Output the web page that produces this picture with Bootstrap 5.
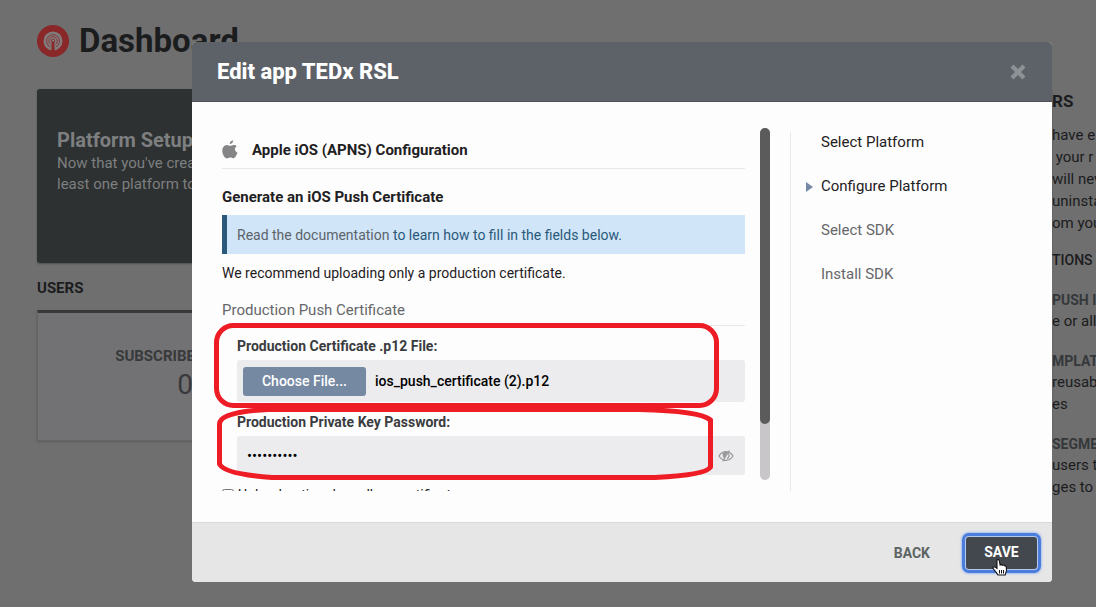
<!DOCTYPE html>
<html lang="en">
<head>
<meta charset="utf-8">
<meta name="viewport" content="width=device-width, initial-scale=1">
<title>Dashboard</title>
<link href="https://cdn.jsdelivr.net/npm/bootstrap@5.3.0/dist/css/bootstrap.min.css" rel="stylesheet">
<style>
body{font-family:Roboto,"Liberation Sans",sans-serif;font-size:14px;line-height:22px;color:#1b1c1e;background:#6f6f6f;min-height:100vh;overflow:hidden}
.page{padding-left:37px;min-height:100vh}
.page-head{height:82px;gap:10px}
.page-head h1{font-size:33px;line-height:40px;font-weight:700;color:#1b1c1e}
.setup{margin-top:7px;height:174px;background:#2d3131;color:#7e7f80;border-radius:3px;padding:39px 20px;box-shadow:0 1px 2px #505050;font-size:15px;line-height:21px;white-space:nowrap}
.setup h2{font-size:20px;line-height:25px;font-weight:700}
.sect{font-size:15px;line-height:22px;font-weight:700;margin:14px 0 11px}
.stats{border:1px solid #646466;border-top:3px solid #38383a;background:#727274;height:131px;box-shadow:0 1px 2px #5c5c5c}
.stat{width:294px;padding-top:32px;color:#38393b;line-height:22px;font-weight:700;font-size:15px}
.stat-n{font-size:28px;line-height:36px;font-weight:400}
.help-col{width:44px;flex:none;white-space:nowrap;padding-top:90px;font-size:15px}
.help-col h3{font-size:17px;line-height:22px;font-weight:700;margin:0 0 12px}
.help-col h4{font-size:14px;line-height:20px;font-weight:500;margin:16px 0 20px}
.help-col .topic{font-size:14px;line-height:20px;color:#35383b;font-weight:700}
.help-col .topic-text{margin-bottom:19px}
.layer{position:absolute;inset:0;padding:42px 44px 25px 192px}
.dialog{position:relative;border:0;border-radius:4px;background:#fdfdfd;color:#1f2022;min-height:540px}
.dialog .modal-header{height:60px;padding:0 26px 0 25px;background:#5d6168;border-bottom:1px solid #504f58;border-radius:4px 4px 0 0}
.dialog h2{font-size:22px;line-height:28px;font-weight:800;color:#fff}
.x-btn{border:0;background:none;padding:0;width:16px;height:18px;line-height:0}
.dialog .modal-body{padding:26px 30px 31px}
.pane{height:363px;overflow:hidden;min-width:0}
.pane-head{height:41px;gap:14px;padding-top:3px;border-bottom:1px solid #e8e8e9}
.pane h3{font-size:15px;line-height:20px;font-weight:700}
.pane h4{font-size:15px;line-height:20px;font-weight:700;margin:18px 0 8px}
.note{height:39px;padding:0 10px;border-left:5px solid #2c587b;background:#d0e5f7;color:#2a587b}
.note a{color:#5c646b;text-decoration:none}
.hint{font-size:14px;line-height:20px;margin:9px 0 16px}
.legend-row{font-size:15px;line-height:22px;color:#66676a;padding-bottom:4px;border-bottom:1px solid #e8e8e9}
.pane .lab{font-size:14px;line-height:20px;font-weight:700;color:#3b3c3f;display:block}
.fieldset-in{padding:10px 0 0 15px}
.file-box{height:42px;background:#ececee;border-radius:3px;padding-left:6px;gap:9px;margin:4px 0 10px;font-size:14px;font-weight:500;color:#000}
.choose{width:123px;height:29px;padding:0;border-radius:3px;background:#7589a3;color:#fff;font-size:14px;line-height:20px;font-weight:500}
.choose:hover{background:#687d98;color:#fff}
.pw-box{height:39px;background:#ececee;border-radius:3px;margin:4px 0 9px;padding:0 11px 0 10px}
.pw-box input{font-size:15px;color:#000;min-width:0}
.opt{gap:4px;font-size:14px;line-height:22px}
.opt input{width:12px;height:12px;margin:0}
.track{width:10px;height:352px;border-radius:5px;background:#c8c6c9;margin:0 20px 0 15px;flex:none}
.thumb{height:296px;border-radius:5px;background:#5b5b5c}
.steps{width:232px;flex:none;margin-top:4px;border-left:1px solid #e9e9ea;height:359px;font-size:15px}
.steps li{height:44px;line-height:20px;padding-left:30px;position:relative}
.steps .todo{color:#66676a}
.steps .now::before{content:"";position:absolute;left:15px;top:6px;border:5px solid transparent;border-left:7px solid #768aa8;border-right:0}
.dialog .modal-footer{height:60px;padding:0 15px;gap:36px;background:#e6e6e6;border-top:1px solid #d9d9da;border-radius:0 0 4px 4px}
.dialog .modal-footer>*{margin:0}
.back-btn{padding:2px 0 0;border:0;color:#5c6464;font-size:14px;font-weight:700}
.save-btn{width:71px;height:32px;padding:0;border:0;border-radius:3px;background:#42484d;color:#fff;font-size:14px;font-weight:700;box-shadow:0 0 0 1px #b5c8ee,0 0 0 4px #4a7ddc,0 0 2px 5px #a7bfee}
.save-btn:hover{background:#42484d;color:#fff}
.marks{position:absolute;left:0;top:0;width:860px;height:540px;pointer-events:none}
</style>
</head>
<body>
<div class="page d-flex">
  <main class="flex-grow-1">
    <header class="page-head d-flex align-items-center">
      <svg width="32" height="32" viewBox="0 0 32 32" aria-hidden="true">
        <circle cx="16" cy="16" r="16" fill="#892729"/><circle cx="16" cy="16" r="9.5" fill="#817b7b"/>
        <g fill="none" stroke="#892729" stroke-width=".8"><path d="M13.200 22A6.500 6.500 0 1 1 18.800 22M13.700 19.500a4.200 4.200 0 1 1 4.600 0"/><circle cx="16" cy="16" r="1.800"/></g>
        <path d="M14.800 16.500h2.400l.5 10h-3.400z" fill="#892729"/>
      </svg>
      <h1 class="m-0">Dashboard</h1>
    </header>
    <section class="setup">
      <h2 class="m-0">Platform Setup</h2>
      <div>Now that you've created at<br>least one platform to</div>
    </section>
    <h3 class="sect">USERS</h3>
    <section class="stats"><div class="stat text-center">SUBSCRIBED USERS<div class="stat-n">0</div></div></section>
  </main>
  <aside class="help-col">
    <h3>RS</h3>
    <div>have e<br>&nbsp;your r<br>will nev<br>uninsta<br>om you</div>
    <h4>TIONS</h4>
    <div class="topic">PUSH I</div><div class="topic-text">e or all</div>
    <div class="topic">MPLATE</div><div class="topic-text">reusab<br>es</div>
    <div class="topic">SEGME</div><div>users to<br>ges to t</div>
  </aside>
</div>

<div class="layer">
  <div class="dialog modal-content" role="dialog" aria-labelledby="dlg-title">
    <div class="modal-header">
      <h2 class="m-0" id="dlg-title">Edit app TEDx RSL</h2>
      <button class="x-btn" type="button" aria-label="Close"><svg width="16" height="16" viewBox="0 0 16 16"><path d="M2 2l12 12M14 2L2 14" stroke="#8d9296" stroke-width="4.200"/></svg></button>
    </div>
    <div class="modal-body d-flex">
      <div class="pane flex-grow-1">
        <div class="pane-head d-flex align-items-center">
          <svg width="16" height="19" viewBox="0 0 16 19" aria-hidden="true"><path fill="#858587" d="M11.200.3c.1 2-1.500 3.800-3.500 3.800C7.500 2.300 9.300.5 11.200.3zM14.700 6.300c-2.700 1.700-2.200 5 .8 6.300-.6 1.800-2.100 5.300-3.900 5.700-1.300.2-1.900-.7-3.500-.7s-2.200.8-3.400.8C2.300 18.100.400 14 .3 11 .2 7.300 2.200 5 4.800 4.900c1.400 0 2.300.9 3.400.9s2.100-1 3.800-.9c1.100 0 2.100.5 2.700 1.400z"/></svg>
          <h3 class="m-0">Apple iOS (APNS) Configuration</h3>
        </div>
        <h4>Generate an iOS Push Certificate</h4>
        <div class="note d-flex align-items-center"><span><a href="#">Read the documentation</a> to learn how to fill in the fields below.</span></div>
        <p class="hint">We recommend uploading only a production certificate.</p>
        <div class="legend-row">Production Push Certificate</div>
        <div class="fieldset-in">
          <label class="lab" for="choose">Production Certificate .p12 File:</label>
          <div class="file-box d-flex align-items-center"><button class="btn choose" id="choose" type="button">Choose File...</button><span>ios_push_certificate (2).p12</span></div>
          <label class="lab" for="pw">Production Private Key Password:</label>
          <div class="pw-box d-flex align-items-center">
            <input class="border-0 bg-transparent p-0 flex-grow-1" id="pw" type="password" value="0123456789">
            <svg width="16" height="12" viewBox="0 0 16 12" aria-hidden="true"><g fill="none" stroke="#97979a" stroke-width="1.200"><path d="M1 6C4.500 .2 11.500 .2 15 6 11.500 11.800 4.500 11.800 1 6zM4.600 11.500L11.400.5M10.500 3.500c1 1.800.5 4-1.500 5.200"/></g><path d="M4.700 3.500C4.400 6 5 7.500 6.200 8L9.600 2.300C8 1.700 6 2 4.700 3.500z" fill="#97979a"/></svg>
          </div>
        </div>
        <div class="opt d-flex align-items-center"><input type="checkbox" id="sandbox"><label for="sandbox">Upload optional sandbox certificate</label></div>
      </div>
      <div class="track"><div class="thumb"></div></div>
      <ol class="steps list-unstyled mb-0">
        <li>Select Platform</li><li class="now">Configure Platform</li><li class="todo">Select SDK</li><li class="todo">Install SDK</li>
      </ol>
    </div>
    <div class="modal-footer">
      <button class="btn back-btn" type="button">BACK</button>
      <button class="btn save-btn" type="button">SAVE</button>
    </div>
    <svg class="marks" viewBox="192 42 860 540" aria-hidden="true">
      <g fill="none" stroke="#ee1c24" stroke-width="5">
        <rect x="216.500" y="325.500" width="500" height="80" rx="17"/>
        <path d="M219.500 464V424Q219.500 412 268 409.500H640Q700 411 710.500 420V467Q706 475 655 477.500H272Q224 474 219.500 464z" stroke-linejoin="round"/>
      </g>
      <path d="M997 560c1.200-.8 2.200 0 2.400 1l.7 4c.8-.6 1.800-.4 2.200.3.700-.5 1.700-.3 2.100.5 1-.3 1.800.3 1.900 1.300l.2 3.600-1.300 4.300H998c-1-2-3.700-5-5-6.600-.4-1.200 1-2 2.100-1.300l1.900 1.300z" fill="#fff" stroke="#111" stroke-width="1.100"/>
      <path d="M999.500 570v3.500M1001.500 570v3.500M1003.500 570v3.500" stroke="#111"/>
    </svg>
  </div>
</div>
<script src="https://cdn.jsdelivr.net/npm/bootstrap@5.3.0/dist/js/bootstrap.bundle.min.js"></script>
</body>
</html>
